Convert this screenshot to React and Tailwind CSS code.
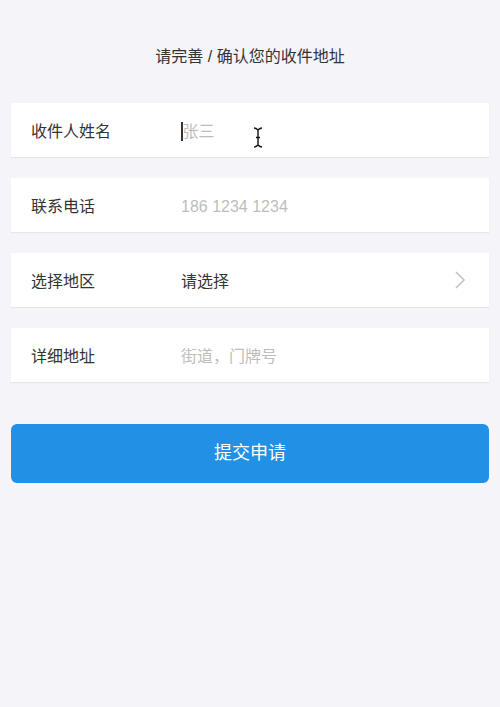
const fields = [
  { label: "收件人姓名", placeholder: "张三", caret: true },
  { label: "联系电话", placeholder: "186 1234 1234" },
  { label: "选择地区", value: "请选择", arrow: true },
  { label: "详细地址", placeholder: "街道，门牌号" },
];

const Row = ({ label, placeholder, value, arrow, caret }) => (
  <div className="relative flex items-center h-[54px] bg-white shadow-[0_1px_1px_rgba(0,0,0,0.06)] px-5">
    <div className="w-[150px] text-[16px] text-[#333] pt-[3px]">{label}</div>
    <div className="flex-1 flex items-center text-[16px] pt-[3px]">
      {caret && <span className="w-[1.5px] h-[19px] bg-[#333]" />}
      {value ? (
        <span className="text-[#333]">{value}</span>
      ) : (
        <span className="text-[#bdbdbd]">{placeholder}</span>
      )}
    </div>
    {arrow && (
      <svg width="12" height="20" viewBox="0 0 12 20" className="mr-[3px]">
        <path d="M2 2l8 8-8 8" fill="none" stroke="#c4c4c4" strokeWidth="1.6" />
      </svg>
    )}
    {caret && (
      <svg
        width="10"
        height="21"
        viewBox="0 0 10 21"
        className="absolute left-[242px] top-[24px]"
      >
        <path
          d="M1 1c2 0 3 1 4 2c1-1 2-2 4-2M5 3v15M1 20c2 0 3-1 4-2c1 1 2 2 4 2M3 10.5h4"
          fill="none"
          stroke="#111"
          strokeWidth="1.4"
        />
      </svg>
    )}
  </div>
);

export default function App() {
  return (
    <div
      className="min-h-[707px] bg-[#f5f4f9] px-[11px]"
      style={{ fontFamily: '"Liberation Sans", "Noto Sans CJK SC", sans-serif' }}
    >
      <h1 className="pt-[45px] h-[68px] leading-6 text-center text-[16px] text-[#333]">
        请完善 / 确认您的收件地址
      </h1>
      <div className="mt-[35px] flex flex-col gap-[21px]">
        {fields.map((f) => (
          <Row key={f.label} {...f} />
        ))}
      </div>
      <button className="mt-[42px] w-full h-[59px] rounded-md bg-[#2190e5] text-white text-[18px]">
        提交申请
      </button>
    </div>
  );
}
